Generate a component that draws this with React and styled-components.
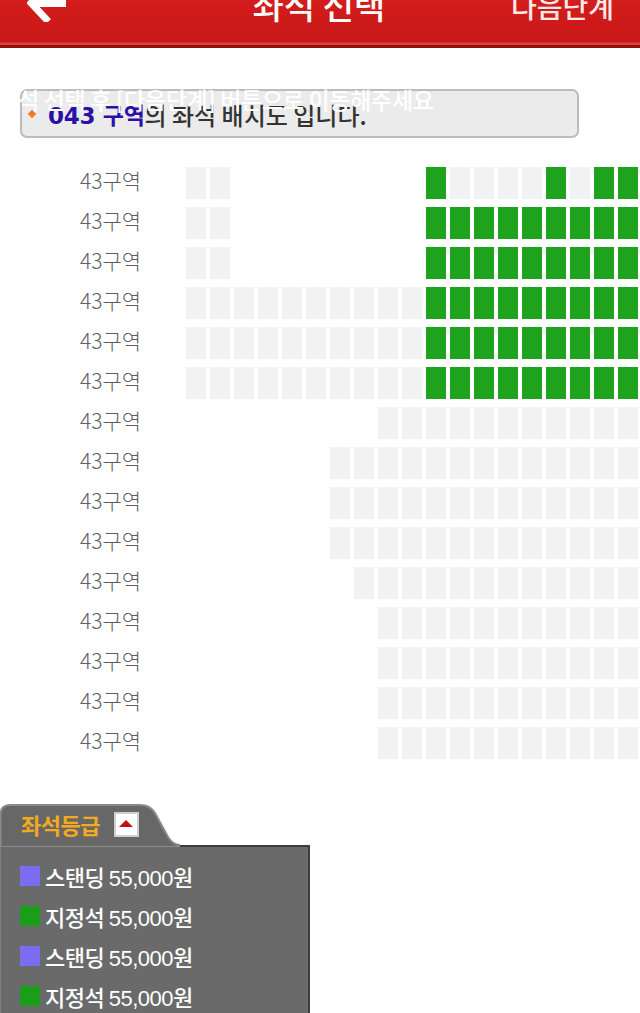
import React from 'react';
import styled, { createGlobalStyle } from 'styled-components';

const GlobalStyle = createGlobalStyle`
  html, body {
    margin: 0;
    padding: 0;
    background: #ffffff;
    font-family: 'Noto Sans CJK KR', 'Noto Sans', sans-serif;
  }
  body {
    width: 640px;
    height: 1013px;
    overflow: hidden;
  }
`;

const Page = styled.div`
  width: 640px;
  height: 1013px;
  display: flex;
  flex-direction: column;
  overflow: hidden;

  & > * {
    flex-shrink: 0;
  }
`;

const Header = styled.header`
  height: 48px;
  display: flex;
  align-items: flex-start;
  overflow: hidden;
  padding: 0 26px 0 27px;
  box-sizing: border-box;
  background: linear-gradient(
    to bottom,
    #d41d1d 0,
    #c91717 42px,
    #d84545 43px,
    #d84545 45px,
    #930b0b 45px,
    #930b0b 48px
  );
`;

const BackButton = styled.div`
  width: 40px;
  margin-top: -16px;
  svg {
    display: block;
  }
`;

const Title = styled.h1`
  flex: 1;
  margin: -12px 0 0 60px;
  text-align: center;
  font-size: 34px;
  line-height: 34px;
  font-weight: 500;
  color: #fff;
`;

const NextButton = styled.div`
  margin-top: -9px;
  font-size: 28px;
  line-height: 30px;
  font-weight: 500;
  color: #fde8e8;
`;

const NoticeWrap = styled.div`
  position: relative;
  margin: 41px 0 0 20px;
  width: 559px;
`;

const NoticeBox = styled.div`
  height: 49px;
  box-sizing: border-box;
  border: 2px solid #bcbcbc;
  border-radius: 7px;
  background: #ebebeb;
  display: flex;
  align-items: center;
  padding: 1px 0 0 7px;
`;

const Diamond = styled.span`
  width: 6px;
  height: 6px;
  background: #f07a2a;
  transform: rotate(45deg);
  margin-right: 13px;
`;

const Section = styled.span`
  font-family: 'DejaVu Sans', 'Noto Sans CJK KR', sans-serif;
  font-weight: 700;
  font-size: 23px;
  color: #2a10a8;
  letter-spacing: -0.3px;
`;

const NoticeText = styled.span`
  font-size: 24px;
  font-weight: 500;
  color: #333;
`;

const Overlay = styled.div`
  position: absolute;
  left: -2px;
  top: -3px;
  font-size: 23px;
  line-height: 26px;
  font-weight: 500;
  color: #ffffff;
  white-space: nowrap;
  letter-spacing: -0.3px;
`;

const SeatMap = styled.div`
  margin-top: 29px;
  display: flex;
  flex-direction: column;
  gap: 8px;
`;

const Row = styled.div`
  display: flex;
  align-items: center;
  height: 32px;
`;

const RowLabel = styled.div`
  width: 186px;
  flex-shrink: 0;
  padding-left: 80px;
  box-sizing: border-box;
  font-size: 21px;
  font-weight: 300;
  color: #5e5e5e;
  margin-top: -6px;
  white-space: nowrap;
`;

const Seats = styled.div`
  display: grid;
  grid-template-columns: repeat(19, 20px);
  gap: 4px;
`;

const Seat = styled.div`
  width: 20px;
  height: 32px;
  background: ${(p) =>
    p.$kind === 'g' ? '#1fa31f' : p.$kind === 'e' ? '#f2f2f2' : 'transparent'};
`;

const Legend = styled.div`
  margin-top: 44px;
  width: 310px;
  display: flex;
  flex-direction: column;
`;

const Tab = styled.div`
  position: relative;
  width: 180px;
  height: 42px;
  display: flex;
  align-items: center;
  padding-left: 21px;
  box-sizing: border-box;
  gap: 14px;
`;

const TabShape = styled.svg`
  position: absolute;
  left: 0;
  top: 0;
  z-index: 0;
`;

const TabTitle = styled.span`
  position: relative;
  font-size: 22px;
  font-weight: 700;
  color: #f2aa1e;
  letter-spacing: -0.5px;
`;

const Toggle = styled.span`
  position: relative;
  width: 25px;
  height: 25px;
  box-sizing: border-box;
  background: #fff;
  border: 2px solid #cfcfcf;
  display: flex;
  align-items: center;
  justify-content: center;

  &::after {
    content: '';
    width: 0;
    height: 0;
    border-left: 7px solid transparent;
    border-right: 7px solid transparent;
    border-bottom: 7px solid #c31010;
    margin-top: -2px;
  }
`;

const LegendBody = styled.div`
  height: 170px;
  background: #6a6a6a;
  border-top: 2px solid #3c3c3c;
  border-right: 2px solid #3f3f3f;
  border-left: 1px solid #808080;
  padding: 19px 0 0 19px;
  display: flex;
  flex-direction: column;
  gap: 20px;
`;

const LegendItem = styled.div`
  display: flex;
  align-items: center;
  gap: 5px;
  height: 20px;
  font-size: 22px;
  font-weight: 500;
  color: #fff;
  letter-spacing: -0.5px;
`;

const Swatch = styled.span`
  width: 20px;
  height: 20px;
  background: ${(p) => p.$color};
`;

const Price = styled.span`
  font-family: 'Liberation Sans', 'Noto Sans CJK KR', sans-serif;
`;

const build = (spec) => {
  const row = Array(19).fill(null);
  spec.forEach(([from, to, kind]) => {
    for (let i = from; i <= to; i += 1) row[i] = kind;
  });
  return row;
};

const rows = [
  build([[0, 1, 'e'], [10, 10, 'g'], [11, 14, 'e'], [15, 15, 'g'], [16, 16, 'e'], [17, 18, 'g']]),
  build([[0, 1, 'e'], [10, 18, 'g']]),
  build([[0, 1, 'e'], [10, 18, 'g']]),
  build([[0, 9, 'e'], [10, 18, 'g']]),
  build([[0, 9, 'e'], [10, 18, 'g']]),
  build([[0, 9, 'e'], [10, 18, 'g']]),
  build([[8, 18, 'e']]),
  build([[6, 18, 'e']]),
  build([[6, 18, 'e']]),
  build([[6, 18, 'e']]),
  build([[7, 18, 'e']]),
  build([[8, 18, 'e']]),
  build([[8, 18, 'e']]),
  build([[8, 18, 'e']]),
  build([[8, 18, 'e']]),
];

const grades = [
  { name: '스탠딩', color: '#7b6cf2' },
  { name: '지정석', color: '#1a9e1a' },
  { name: '스탠딩', color: '#7b6cf2' },
  { name: '지정석', color: '#1a9e1a' },
];

export default function App() {
  return (
    <Page>
      <GlobalStyle />
      <Header>
        <BackButton>
          <svg width="40" height="38" viewBox="0 0 40 38">
            <path
              d="M19 3 L4 19 L19 35"
              fill="none"
              stroke="#fff"
              strokeWidth="7"
              strokeLinecap="square"
              strokeLinejoin="miter"
            />
            <path d="M6 19 H39" stroke="#fff" strokeWidth="8" />
          </svg>
        </BackButton>
        <Title>좌석 선택</Title>
        <NextButton>다음단계</NextButton>
      </Header>

      <NoticeWrap>
        <NoticeBox>
          <Diamond />
          <Section>043 구역</Section>
          <NoticeText>의 좌석 배치도 입니다.</NoticeText>
        </NoticeBox>
        <Overlay>석 선택 후 [다음단계] 버튼으로 이동해주세요</Overlay>
      </NoticeWrap>

      <SeatMap>
        {rows.map((row, i) => (
          <Row key={i}>
            <RowLabel>43구역</RowLabel>
            <Seats>
              {row.map((kind, j) => (
                <Seat key={j} $kind={kind} />
              ))}
            </Seats>
          </Row>
        ))}
      </SeatMap>

      <Legend>
        <Tab>
          <TabShape width="180" height="44" viewBox="0 0 180 44">
            <path
              d="M0.5 44 V12 Q0.5 2 10 2 H140 Q150 2 155 10 L168 34 Q173 42 180 42 V44 Z"
              fill="#676767"
              stroke="#8a8a8a"
              strokeWidth="2"
            />
          </TabShape>
          <TabTitle>좌석등급</TabTitle>
          <Toggle />
        </Tab>
        <LegendBody>
          {grades.map((g, i) => (
            <LegendItem key={i}>
              <Swatch $color={g.color} />
              <span>
                {g.name} <Price>55,000원</Price>
              </span>
            </LegendItem>
          ))}
        </LegendBody>
      </Legend>
    </Page>
  );
}
